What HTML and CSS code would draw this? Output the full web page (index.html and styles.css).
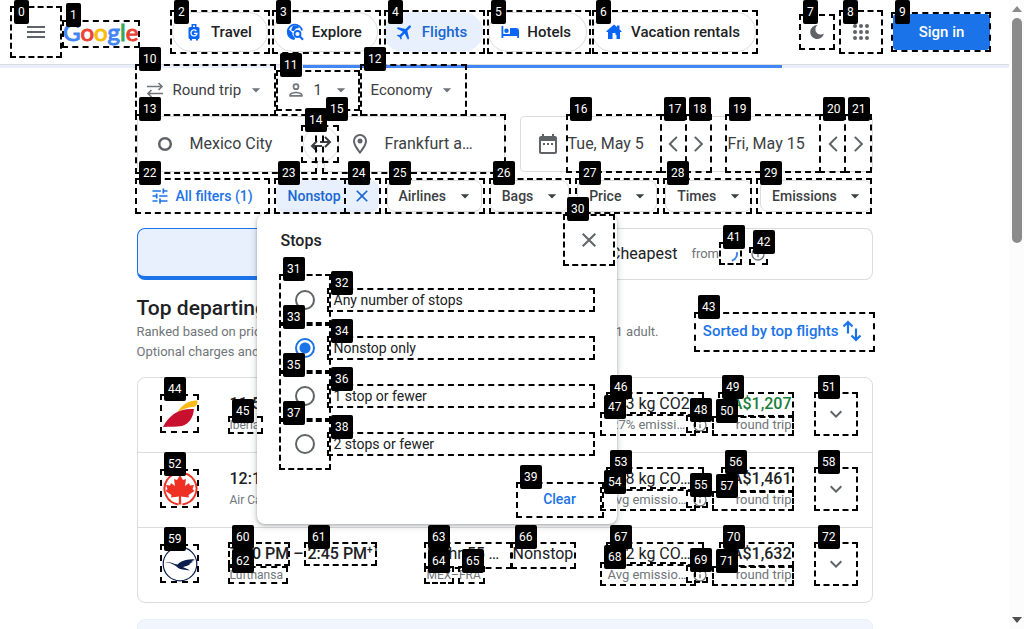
FILE: index.html
```html
<!DOCTYPE html>
<html lang="en">
<head>
<meta charset="utf-8">
<title>Google Flights</title>
<link rel="stylesheet" href="styles.css">
</head>
<body>
<svg class="sprite" aria-hidden="true">
  <symbol id="caret" viewBox="0 0 24 24"><path d="M7 10l5 5 5-5z"/></symbol>
  <symbol id="close" viewBox="0 0 24 24"><path d="M19 6.4 17.6 5 12 10.6 6.4 5 5 6.4l5.6 5.6L5 17.6 6.4 19l5.6-5.6 5.6 5.6 1.4-1.4-5.6-5.6z"/></symbol>
  <symbol id="prev" viewBox="0 0 24 24"><path d="M15.5 3.5 7 12l8.500 8.500" fill="none" stroke="currentColor" stroke-width="2.400"/></symbol>
  <symbol id="next" viewBox="0 0 24 24"><path d="M7 3.500 15.500 12l-8.500 8.500" fill="none" stroke="currentColor" stroke-width="2.400"/></symbol>
  <symbol id="down" viewBox="0 0 24 24"><path d="M7.400 8.600 12 13.200l4.600-4.600L18 10l-6 6-6-6z"/></symbol>
  <symbol id="info" viewBox="0 0 24 24"><path d="M11 17h2v-6h-2v6zm0-8h2V7h-2v2zm1-7a10 10 0 1 0 0 20 10 10 0 0 0 0-20zm0 18a8 8 0 1 1 0-16 8 8 0 0 1 0 16z"/></symbol>
</svg>
<div class="window">
<div class="page">
  <header class="topbar">
    <button class="icon-btn menu" aria-label="Main menu"><svg class="i24" viewBox="0 0 24 24"><path d="M3 18h18v-2H3v2zm0-5h18v-2H3v2zm0-7v2h18V6H3z"/></svg></button>
    <a class="logo" href="#" aria-label="Google"><span class="b">G</span><span class="r">o</span><span class="y">o</span><span class="b">g</span><span class="g">l</span><span class="r">e</span></a>
    <nav class="nav">
      <a class="chip" href="#"><svg class="i20" viewBox="0 0 20 20"><path d="M7.500 2h5v3H14a1.500 1.500 0 0 1 1.500 1.500v9A1.500 1.500 0 0 1 14 17v1.500h-2V17H8v1.500H6V17a1.500 1.500 0 0 1-1.500-1.500v-9A1.500 1.500 0 0 1 6 5h1.500zM9 3.500V5h2V3.500z"/><path d="M12.300 9a3 3 0 1 0 .7 2.300h-3" fill="none" stroke="#fff" stroke-width="1.300"/></svg>Travel</a>
      <a class="chip" href="#"><svg class="i20" viewBox="0 0 20 20"><path d="M9 17A7.200 7.200 0 1 1 17 8.500" fill="none" stroke="currentColor" stroke-width="1.800"/><path d="M3 6.500l4.500 4.300v2.200L10 16v1.500C5 17.500 2 13 3 6.500zM8 3.500l5 .2 1 2.300-3 .5-2 2.500H6.500V7z"/><circle cx="12.500" cy="12" r="3" fill="#fff" stroke="currentColor" stroke-width="1.800"/><path d="M14.500 14l3.500 3.800" stroke="currentColor" stroke-width="2"/></svg>Explore</a>
      <a class="chip active" href="#"><svg class="i20" viewBox="0 0 24 24"><path transform="rotate(45 12 12)" d="M21 16v-2l-8-5V3.500a1.500 1.500 0 0 0-3 0V9l-8 5v2l8-2.500V19l-2 1.500V22l3.500-1 3.500 1v-1.500L13 19v-5.500z"/></svg>Flights</a>
      <a class="chip" href="#"><svg class="i20" viewBox="0 0 20 20"><path d="M1.500 4h1.800v8H10V6h6a3 3 0 0 1 3 3v7h-1.800v-2H3.300v2H1.500zM6.500 6.500a2.200 2.200 0 1 1 0 4.500 2.200 2.200 0 0 1 0-4.500z"/></svg>Hotels</a>
      <a class="chip" href="#"><svg class="i20" viewBox="0 0 20 20"><path d="M10 2.500l3 2.500V3.500h2.500v4L17.500 9v1H16v7h-3.500v-4h-1v-2h-3v6H4v-7H2.500V9z"/></svg>Vacation rentals</a>
    </nav>
    <div class="account">
      <button class="icon-btn" aria-label="Change appearance"><svg class="i20" viewBox="0 0 20 20"><path d="M10.500 3a7 7 0 1 0 6.500 8.500A5 5 0 0 1 10.500 3z"/></svg></button>
      <button class="icon-btn" aria-label="Google apps"><svg class="i24" viewBox="0 0 24 24"><g><circle cx="6" cy="6" r="2"/><circle cx="12" cy="6" r="2"/><circle cx="18" cy="6" r="2"/><circle cx="6" cy="12" r="2"/><circle cx="12" cy="12" r="2"/><circle cx="18" cy="12" r="2"/><circle cx="6" cy="18" r="2"/><circle cx="12" cy="18" r="2"/><circle cx="18" cy="18" r="2"/></g></svg></button>
      <a class="signin" href="#">Sign in</a>
    </div>
  </header>
  <div class="progress"><div class="progress-fill"></div></div>

  <main class="content">
    <div class="options">
      <label class="option trip"><svg class="i20" viewBox="0 0 20 20"><path d="M2 6.500h15M13.500 3l3.500 3.500L13.500 10M18 13.500H3M6.500 10L3 13.500 6.500 17" fill="none" stroke="currentColor" stroke-width="1.600"/></svg><select aria-label="Trip type"><option>Round trip</option></select><svg class="i20 caret"><use href="#caret"/></svg></label>
      <label class="option pax"><svg class="i20" viewBox="0 0 24 24"><path d="M12 6a2 2 0 1 1 0 4 2 2 0 0 1 0-4m0 10c2.700 0 5.800 1.300 6 2H6c.2-.7 3.300-2 6-2m0-12a4 4 0 1 0 0 8 4 4 0 0 0 0-8zm0 10c-2.700 0-8 1.300-8 4v2h16v-2c0-2.700-5.300-4-8-4z"/></svg><select aria-label="Passengers"><option>1</option></select><svg class="i20 caret"><use href="#caret"/></svg></label>
      <label class="option cabin"><select aria-label="Cabin class"><option>Economy</option></select><svg class="i20 caret"><use href="#caret"/></svg></label>
    </div>

    <form class="search">
      <div class="places">
        <label class="field"><svg class="i24" viewBox="0 0 24 24"><circle cx="12" cy="12" r="5.800" fill="none" stroke="currentColor" stroke-width="2.500"/></svg><input type="text" value="Mexico City" aria-label="Where from?"></label>
        <button type="button" class="swap" aria-label="Swap origin and destination"><svg class="i24" viewBox="0 0 24 24"><path d="M8 9L3 14l5 5M3.500 14H13M16 5l5 5-5 5M20.500 10H11" fill="none" stroke="currentColor" stroke-width="2"/></svg></button>
        <label class="field to"><svg class="i24" viewBox="0 0 24 24"><path d="M12 2a7 7 0 0 0-7 7c0 5.200 7 13 7 13s7-7.800 7-13a7 7 0 0 0-7-7zM7 9a5 5 0 0 1 10 0c0 2.900-2.900 7.200-5 9.900C9.900 16.200 7 11.900 7 9z"/><circle cx="12" cy="9" r="2.500"/></svg><input type="text" value="Frankfurt a…" aria-label="Where to?"></label>
      </div>
      <div class="dates">
        <svg class="i24" viewBox="0 0 24 24"><path d="M19 4h-1V2h-2v2H8V2H6v2H5a2 2 0 0 0-2 2v14c0 1.100.9 2 2 2h14a2 2 0 0 0 2-2V6a2 2 0 0 0-2-2zm0 16H5V9h14zM7 11h2v2H7zm4 0h2v2h-2zm4 0h2v2h-2z"/></svg>
        <input type="text" value="Tue, May 5" aria-label="Departure">
        <button type="button" aria-label="Earlier departure"><svg class="i20"><use href="#prev"/></svg></button>
        <button type="button" aria-label="Later departure"><svg class="i20"><use href="#next"/></svg></button>
        <input class="return" type="text" value="Fri, May 15" aria-label="Return">
        <button type="button" aria-label="Earlier return"><svg class="i20"><use href="#prev"/></svg></button>
        <button type="button" aria-label="Later return"><svg class="i20"><use href="#next"/></svg></button>
      </div>
    </form>

    <div class="filters">
      <button class="all"><svg class="i20" viewBox="0 0 24 24"><path d="M3 17v2h6v-2H3zM3 5v2h10V5H3zm10 16v-2h8v-2h-8v-2h-2v6h2zM7 9v2H3v2h4v2h2V9H7zm14 4v-2H11v2h10zm-6-4h2V7h4V5h-4V3h-2v6z"/></svg>All filters (1)</button>
      <div class="filter on"><button>Nonstop</button><button aria-label="Clear stops"><svg class="i20"><use href="#close"/></svg></button></div>
      <button class="filter">Airlines<svg class="i20"><use href="#caret"/></svg></button>
      <button class="filter">Bags<svg class="i20"><use href="#caret"/></svg></button>
      <button class="filter">Price<svg class="i20"><use href="#caret"/></svg></button>
      <button class="filter">Times<svg class="i20"><use href="#caret"/></svg></button>
      <button class="filter">Emissions<svg class="i20"><use href="#caret"/></svg></button>

      <section class="popup" role="dialog" aria-labelledby="stops-title">
        <div class="popup-head"><h2 id="stops-title">Stops</h2><button class="icon-btn" aria-label="Close"><svg class="i24"><use href="#close"/></svg></button></div>
        <label class="choice"><input type="radio" name="stops">Any number of stops</label>
        <label class="choice"><input type="radio" name="stops" checked>Nonstop only</label>
        <label class="choice"><input type="radio" name="stops">1 stop or fewer</label>
        <label class="choice"><input type="radio" name="stops">2 stops or fewer</label>
        <div class="popup-foot"><button>Clear</button></div>
      </section>
    </div>

    <div class="tabs">
      <button class="tab selected" aria-label="Best"></button>
      <button class="tab">Cheapest<small>from</small><span class="spinner"></span><svg class="i16"><use href="#info"/></svg></button>
    </div>

    <div class="heading">
      <div>
        <h1>Top departing flights</h1>
        <p class="line"><span>Ranked based on price and convenience</span><span>for 1 adult.</span></p>
        <p>Optional charges and bag fees may apply.</p>
      </div>
      <button class="sort">Sorted by top flights<svg class="i24" viewBox="0 0 24 24"><path d="M8 14.500V3M3.500 7.500L8 3l4.500 4.500M16 9.500V21m-4.500-4.500L16 21l4.500-4.500" fill="none" stroke="currentColor" stroke-width="2.200"/></svg></button>
    </div>

    <ul class="results">
      <li>
        <svg class="carrier" viewBox="0 0 36 36"><path d="M15 17C20 9 26 4 35.500 4.500 35.500 9 34 10.500 31 11 25 11.500 20 13 15 17z" fill="#fbba16"/><path d="M1 31C7 19 17 12 32 13c-1 9-5 15-12 17-6 1-12 .5-19 1z" fill="#c8102e"/></svg>
        <div><strong>11:50 AM</strong><small>Iberia</small></div>
        <div></div><div></div>
        <div class="co2"><span>673 kg CO2</span><small>-27% emissi…<svg class="i16"><use href="#info"/></svg></small></div>
        <div class="price"><strong class="low">A$1,207</strong><small>round trip</small></div>
        <button class="icon-btn" aria-label="Flight details"><svg class="i24"><use href="#down"/></svg></button>
      </li>
      <li>
        <svg class="carrier" viewBox="0 0 36 36"><path d="M16.500 33.500a16 16 0 1 1 4 0" fill="none" stroke="#ee3124" stroke-width="2"/><path d="M18 4l3 5 3-1-1 7 4-3 1 2.500 4-.5-1.500 4 2 2-6 4 .5 2.500-8-1 .3 8h-2.600l.3-8-8 1 .5-2.500-6-4 2-2L4 14l4 .5L9 12l4 3-1-7 3 1z" fill="#ee3124"/></svg>
        <div><strong>12:10 PM</strong><small>Air Canada</small></div>
        <div></div><div></div>
        <div class="co2"><span>928 kg CO…</span><small>Avg emissio…<svg class="i16"><use href="#info"/></svg></small></div>
        <div class="price"><strong>A$1,461</strong><small>round trip</small></div>
        <button class="icon-btn" aria-label="Flight details"><svg class="i24"><use href="#down"/></svg></button>
      </li>
      <li>
        <svg class="carrier" viewBox="0 0 36 36"><circle cx="18" cy="18" r="16.800" fill="none" stroke="#0a1d4d" stroke-width="1.200"/><path d="M3 16c5-.5 9 2 12.500 2.500C20 14 25 13.500 33 13l-3 1.500h2.500L29 16h2l-4 1.500h2C26 20 23 20.500 21 21c2 1 4 1.500 7 3.500-5-1-10-.5-13-3.500-3-2.500-6-4-12-5z" fill="#0a1d4d"/></svg>
        <div><strong>7:50 PM – 2:45 PM<sup>+1</sup></strong><small>Lufthansa</small></div>
        <div><span>11 hr 55 …</span><small>MEX–FRA</small></div>
        <div><span>Nonstop</span></div>
        <div class="co2"><span>902 kg CO…</span><small>Avg emissio…<svg class="i16"><use href="#info"/></svg></small></div>
        <div class="price"><strong>A$1,632</strong><small>round trip</small></div>
        <button class="icon-btn" aria-label="Flight details"><svg class="i24"><use href="#down"/></svg></button>
      </li>
    </ul>
    <div class="notice"></div>
  </main>
</div>
<div class="scrollbar" aria-hidden="true"><span class="up"></span><span class="thumb"></span><span class="dn"></span></div>
</div>
<div class="marks" id="marks" aria-hidden="true"></div>
<script src="marks.js"></script>
</body>
</html>
```
FILE: styles.css
```css
* { box-sizing: border-box; }
body { margin: 0; height: 100vh; overflow: hidden; background: #fff; color: #202124; font: 14px/20px Roboto, Arial, sans-serif; }
button, input, select { font: inherit; color: inherit; margin: 0; padding: 0; border: 0; background: none; outline: 0; }
a { color: inherit; text-decoration: none; }
h1, h2, p, ul { margin: 0; padding: 0; }
svg { fill: currentColor; flex: none; display: block; }
.sprite { position: absolute; width: 0; height: 0; }
.i16 { width: 16px; height: 16px; }
.i20 { width: 20px; height: 20px; }
.i24 { width: 24px; height: 24px; }
.window { display: flex; height: 100%; }
.page { flex: 1; min-width: 0; overflow: hidden; }

.topbar { display: flex; align-items: center; height: 65px; padding: 0 19px 0 12px; border-bottom: 1px solid #dadce0; }
.icon-btn { display: flex; align-items: center; justify-content: center; width: 44px; height: 44px; color: #5f6368; }
.menu { width: 48px; }
.logo { width: 80px; padding-left: 3px; font: 24px/32px Lato, sans-serif; -webkit-text-stroke: 1px; }
.b { color: #4285f4; } .r { color: #ea4335; } .y { color: #fbbc05; } .g { color: #34a853; }
.nav { display: flex; gap: 5px; margin-left: 32px; }
.chip { display: flex; align-items: center; gap: 7px; height: 40px; padding: 0 15px 0 11px; border: 1px solid #dadce0; border-radius: 20px; font-size: 15px; font-weight: 500; white-space: nowrap; }
.chip svg { color: #0b66f5; }
.chip.active { background: #e8f0fe; border-color: #e8f0fe; color: #1967d2; }
.account { display: flex; align-items: center; margin-left: auto; }
.signin { width: 97px; margin-left: 10px; border-radius: 4px; background: #1a73e8; color: #fff; font-size: 15px; font-weight: 500; line-height: 36px; text-align: center; }
.progress { height: 3px; padding: 0 227px 0 303px; background: #e8eefc; }
.progress-fill { height: 3px; background: #4285f4; }

.content { max-width: 736px; margin: 0 auto; }
.options { display: flex; height: 48px; padding: 0 8px; align-items: center; font-size: 15px; color: #3c4043; }
.option { display: flex; align-items: center; padding-bottom: 4px; }
.option svg { color: #70757a; }
.option select { appearance: none; }
.option .caret { margin-left: 4px; }
.option.pax .caret { margin-left: 8px; }
.trip select, .pax select { margin-left: 8px; }
.pax, .cabin { margin-left: 20px; }

.search { display: grid; grid-template-columns: minmax(0, 1fr) minmax(0, 353px); gap: 15px; font-size: 16px; color: #3c4043; }
.search svg { color: #5f6368; }
.search input { min-width: 0; width: 0; flex: 1; }
.places { display: grid; grid-template-columns: minmax(0, 1fr) auto minmax(0, 1fr); }
.field { display: flex; align-items: center; gap: 13px; height: 56px; padding: 0 15px; border: 1px solid #dadce0; border-radius: 4px; }
.field.to { padding: 0 8px 0 23px; }
.swap { z-index: 1; display: grid; place-items: center; width: 36px; height: 36px; margin: 10px -15px; border: 1px solid #dadce0; border-radius: 50%; background: #fff; }
.swap svg { color: #3c4043; }
.dates { display: flex; align-items: center; height: 56px; padding: 0 0 0 15px; border: 1px solid #dadce0; border-radius: 4px; }
.dates input { margin-left: 8px; }
.dates .return { margin-left: 16px; }
.dates button { display: grid; place-items: center; width: 25px; height: 56px; }

.filters { position: relative; display: flex; gap: 8px; margin-top: 8px; height: 32px; font-weight: 500; white-space: nowrap; color: #3c4043; }
.all { display: flex; align-items: center; gap: 6px; width: 131px; padding-left: 13px; color: #1a73e8; }
.filter { display: flex; align-items: center; justify-content: space-between; flex: 1 0 auto; padding: 0 6px 0 11px; border: 1px solid #dadce0; border-radius: 8px; }
.filter > svg { margin-left: 6px; }
.filter.on { flex: none; width: 103px; background: #e8f0fe; border-color: #e8f0fe; color: #1967d2; }

.popup { position: absolute; z-index: 5; left: 120px; top: 34px; width: 360px; height: 310px; padding: 2px 4px 8px 24px; border-radius: 8px; background: #fff; box-shadow: 0 2px 6px 2px rgba(60,64,67,.15), 0 1px 3px rgba(60,64,67,.35); color: #202124; font-weight: 400; }
.popup-head { display: flex; align-items: center; justify-content: space-between; height: 48px; }
.popup-head h2 { padding-top: 2px; font-size: 16px; font-weight: 500; }
.popup-head button { width: 48px; }
.popup-head + .choice { margin-top: 12px; }
.choice { display: flex; align-items: center; gap: 19px; height: 48px; padding-left: 14px; }
.choice input { appearance: none; width: 20px; height: 20px; border: 2px solid #5f6368; border-radius: 50%; }
.choice input:checked { border-color: #1a73e8; background: radial-gradient(circle, #1a73e8 5px, transparent 6px); }
.popup-foot { display: flex; justify-content: flex-end; padding: 13px 11px 0 0; color: #1a73e8; }
.popup-foot button { width: 84px; height: 36px; font-weight: 500; }

.tabs { display: grid; grid-template-columns: 1fr 1fr; margin-top: 16px; height: 52px; }
.tab { display: flex; align-items: center; justify-content: center; border: 1px solid #dadce0; border-left: 0; border-radius: 0 8px 8px 0; font-size: 16px; }
.tab.selected { border: 1px solid #1a73e8; border-bottom-width: 4px; border-radius: 8px 0 0 8px; background: #e8f0fe; }
.tab small { margin-left: 14px; font-size: 13px; color: #70757a; }
.spinner { width: 16px; height: 16px; margin: 0 12px 0 3px; border: 2px solid transparent; border-right-color: #4285f4; border-radius: 50%; transform: rotate(30deg); }
.tab svg { color: #70757a; }

.heading { display: flex; justify-content: space-between; align-items: center; margin-top: 13px; height: 70px; }
.heading h1 { font-size: 21px; font-weight: 500; line-height: 28px; }
.heading p { font-size: 13px; line-height: 20px; color: #70757a; white-space: nowrap; }
.heading .line { display: flex; justify-content: space-between; width: 522px; }
.sort { display: flex; align-items: center; gap: 1px; padding: 6px 9px 0 0; color: #1a73e8; font-size: 15px; font-weight: 500; white-space: nowrap; }

.results { margin-top: 14px; border: 1px solid #dadce0; border-radius: 8px; list-style: none; }
.results li { display: grid; grid-template-columns: 68px 1fr 86px 95px 106px 78px 66px; height: 75px; padding: 14px 14px 0 24px; border-bottom: 1px solid #dadce0; }
.results li:last-child { height: 74px; border-bottom: 0; }
.results strong, .results span { display: block; font-size: 16px; line-height: 24px; font-weight: 500; white-space: nowrap; }
.results span { font-weight: 400; }
.results small { display: block; font-size: 12px; line-height: 18px; color: #70757a; }
.results .co2 small, .results .price small { font-size: 13px; }
.results .co2 small { display: flex; align-items: center; justify-content: space-between; padding-right: 6px; white-space: nowrap; }
.results sup { font-size: 10px; line-height: 0; }
.carrier { width: 36px; height: 36px; margin-top: 4px; }
.price { text-align: right; }
.results .low { color: #188038; }
.results .icon-btn { justify-self: end; }
.notice { margin-top: 16px; height: 60px; border: 1px solid #e8f0fe; border-radius: 8px; background: #f1f6fe; }

.scrollbar { display: flex; flex-direction: column; align-items: center; width: 15px; padding: 6px 0; background: #fcfcfc; }
.up, .dn { border: 5px solid transparent; border-top-width: 0; border-bottom: 6px solid #8b8b8b; }
.dn { margin-top: auto; border-top: 6px solid #505050; border-bottom-width: 0; }
.thumb { width: 10px; height: 225px; margin-top: 6px; border-radius: 5px; background: #8b8b8b; }

.marks { position: absolute; inset: 0; z-index: 10; overflow: hidden; pointer-events: none; }
.mark { position: absolute; border: 2px dashed #000; }
.tag { position: absolute; height: 24px; padding: 0 4px; border-radius: 2px; background: #000; color: #fff; font-size: 12px; line-height: 24px; }
```
FILE: marks.js
```js
// Numbered outlines: [number, left, top, width, height]
const marks = [
  [0,10,6,52,52],[1,62,20,78,28],[2,170,10,100,44],[3,272,10,109,44],[4,384,10,101,44],
  [5,487,10,104,44],[6,592,10,166,44],[7,799,14,36,36],[8,839,10,44,44],[9,891,12,100,40],
  [10,135,64,141,52],[11,276,70,84,41],[12,360,64,107,52],[13,135,114,182,60],[14,301,125,38,38],
  [15,322,114,184,60],[16,566,114,96,59],[17,660,114,27,59],[18,685,114,27,59],[19,725,114,96,59],
  [20,819,114,27,59],[21,844,114,28,59],[22,135,178,135,36],[23,274,178,72,36],[24,344,178,37,36],
  [25,385,178,100,36],[26,489,178,82,36],[27,575,178,84,36],[28,663,178,89,36],[29,756,178,116,36],
  [30,563,214,52,52],[31,279,274,52,52],[32,327,288,268,24],[33,279,322,52,52],[34,327,336,268,24],
  [35,279,370,52,52],[36,327,384,268,24],[37,279,418,52,52],[38,327,432,268,24],[39,516,482,88,36],
  [41,719,242,23,23],[42,749,247,19,18],[43,694,312,181,40],[44,160,394,39,39],[45,228,416,35,18],
  [46,606,392,98,24],[47,600,412,96,24],[48,686,415,22,18],[49,718,392,76,25],[50,712,416,82,20],[51,814,392,44,44],
  [52,160,469,39,39],[53,606,467,98,24],[54,600,487,96,24],[55,686,490,22,18],[56,721,467,73,25],[57,712,491,82,20],[58,814,467,44,44],
  [59,160,544,39,39],[60,228,542,62,24],[61,304,542,73,24],[62,228,566,60,18],[63,424,542,88,27],
  [64,424,566,30,18],[65,458,566,27,18],[66,511,542,65,27],[67,606,542,98,24],[68,600,562,96,24],
  [69,686,565,22,18],[70,719,542,75,25],[71,712,566,82,20],[72,814,542,44,44]
];
const layer = document.getElementById('marks');
for (const [n, x, y, w, h] of marks) {
  const box = document.createElement('div');
  box.className = 'mark';
  box.style.cssText = `left:${x}px;top:${y}px;width:${w}px;height:${h}px`;
  const tag = document.createElement('span');
  tag.className = 'tag';
  tag.textContent = n;
  tag.style.cssText = `left:${x + 4}px;top:${Math.max(0, y - 17)}px`;
  layer.append(box, tag);
}
```
